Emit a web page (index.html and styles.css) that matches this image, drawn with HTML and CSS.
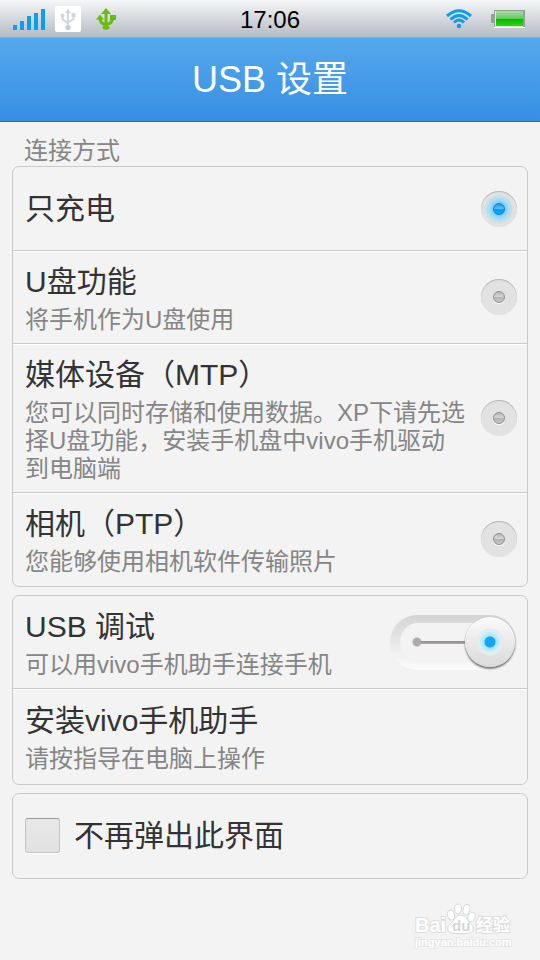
FILE: index.html
```html
<!DOCTYPE html>
<html lang="zh-CN">
<head>
  <meta charset="UTF-8">
  <meta name="viewport" content="width=device-width, initial-scale=1.0">
  <title>USB 设置</title>
  <link rel="stylesheet" href="styles.css">
</head>
<body>
  <div class="status-bar">
    <div class="status-left">
      <svg class="icon-signal" width="32" height="22" viewBox="0 0 32 22" fill="#0a9df0" aria-hidden="true">
        <rect x="0" y="17" width="4" height="5"/>
        <rect x="7" y="13" width="4" height="9"/>
        <rect x="14" y="8" width="4" height="14"/>
        <rect x="21" y="5" width="4" height="17"/>
        <rect x="28" y="1" width="4" height="21"/>
      </svg>
      <svg class="icon-usb" width="26" height="26" viewBox="0 0 26 26" aria-hidden="true">
        <rect width="26" height="26" rx="2" fill="#fff"/>
        <g fill="none" stroke="#d3d6d9" stroke-width="2">
          <path d="M13 5v15M7.500 10v3l5.500 4.500M18.500 9v4l-5.500 3.500"/>
        </g>
        <path d="M13 2.500l3 4.500h-6z" fill="#d3d6d9"/>
        <circle cx="7.500" cy="9.500" r="1.900" fill="#d3d6d9"/>
        <rect x="16.500" y="7" width="4" height="4" fill="#d3d6d9"/>
        <circle cx="13" cy="21.500" r="2.600" fill="#cacdd0"/>
      </svg>
      <svg class="icon-usb" width="20" height="22" viewBox="0 0 20 22" fill="#68bd0c" aria-hidden="true">
        <path d="M10 0l5 6h-10z"/>
        <path d="M0 11.500l4-5 4 5z"/>
        <rect x="14" y="7" width="6" height="5"/>
        <path d="M10 4v15M4 10c0 4 2 6 6 6.500M16.500 10c0 4-2.500 6-6.500 6.500" fill="none" stroke="#68bd0c" stroke-width="3"/>
        <ellipse cx="10" cy="19.500" rx="3.500" ry="2.200"/>
      </svg>
    </div>
    <time class="clock">17:06</time>
    <div class="status-right">
      <svg width="26" height="20" viewBox="0 0 26 20" fill="none" stroke="#0a9df0" stroke-width="3" aria-hidden="true">
        <path d="M1 7Q13-3.500 25 7"/>
        <path d="M4.500 10.500Q13 2.500 21.500 10.500"/>
        <path d="M8 13.500Q13 8.500 18 13.500"/>
        <circle cx="13" cy="17" r="2.200" fill="#0a9df0" stroke="none"/>
      </svg>
      <svg width="34" height="20" viewBox="0 0 34 20" aria-hidden="true">
        <defs>
          <linearGradient id="charge" x1="0" y1="0" x2="0" y2="1">
            <stop offset="0" stop-color="#a9dfa6"/>
            <stop offset=".5" stop-color="#62c95d"/>
            <stop offset=".51" stop-color="#12ad08"/>
            <stop offset="1" stop-color="#1fe000"/>
          </linearGradient>
        </defs>
        <rect x="3" y="18" width="31" height="1" fill="#fff"/>
        <rect x="0" y="5" width="3" height="9" fill="#999ca0"/>
        <rect x="3" y="1" width="31" height="17" fill="#999c9f"/>
        <rect x="4" y="2" width="28" height="16" fill="#e3e7e4"/>
        <rect x="5" y="2" width="27" height="15" fill="url(#charge)"/>
      </svg>
    </div>
  </div>

  <header class="header">
    <h1>USB 设置</h1>
  </header>

  <main class="content">
    <h2 class="section-title" id="mode-title">连接方式</h2>

    <div class="card" role="radiogroup" aria-labelledby="mode-title">
      <label class="row">
        <span class="row-title">只充电</span>
        <input type="radio" class="radio" name="mode" checked>
      </label>
      <label class="row">
        <span class="row-text">
          <span class="row-title">U盘功能</span>
          <span class="row-desc">将手机作为U盘使用</span>
        </span>
        <input type="radio" class="radio" name="mode">
      </label>
      <label class="row">
        <span class="row-text">
          <span class="row-title">媒体设备（MTP）</span>
          <span class="row-desc">您可以同时存储和使用数据。XP下请先选择U盘功能，安装手机盘中vivo手机驱动到电脑端</span>
        </span>
        <input type="radio" class="radio" name="mode">
      </label>
      <label class="row">
        <span class="row-text">
          <span class="row-title">相机（PTP）</span>
          <span class="row-desc">您能够使用相机软件传输照片</span>
        </span>
        <input type="radio" class="radio" name="mode">
      </label>
    </div>

    <div class="card">
      <label class="row">
        <span class="row-text">
          <span class="row-title">USB 调试</span>
          <span class="row-desc">可以用vivo手机助手连接手机</span>
        </span>
        <input type="checkbox" class="switch" role="switch" checked>
      </label>
      <a href="#" class="row row-link">
        <span class="row-text">
          <span class="row-title">安装vivo手机助手</span>
          <span class="row-desc">请按指导在电脑上操作</span>
        </span>
      </a>
    </div>

    <div class="card">
      <label class="row">
        <input type="checkbox" class="checkbox">
        <span class="row-title">不再弹出此界面</span>
      </label>
    </div>
  </main>

  <svg class="watermark" width="104" height="48" viewBox="0 0 104 48">
    <text class="wm-logo" x="5" y="30">Bai</text>
    <g fill="#fff" stroke="#d8d8d8" stroke-width="1">
      <ellipse cx="41" cy="13" rx="3.500" ry="5" transform="rotate(-15 41 13)"/>
      <ellipse cx="48" cy="7" rx="3.500" ry="5"/>
      <ellipse cx="56.500" cy="7.500" rx="3.500" ry="5" transform="rotate(12 56.500 7.500)"/>
      <ellipse cx="61.500" cy="15" rx="3.500" ry="5" transform="rotate(20 61.500 15)"/>
      <path d="M51 13c5 0 6 5 9 8 5 4 4 10-1 10-4 1-12 1-16 0-6 0-7-6-2-10 4-3 5-8 10-8z"/>
    </g>
    <text class="wm-du" x="42" y="29">du</text>
    <text class="wm-cn" x="66" y="29">经验</text>
    <text class="wm-url" x="5" y="44">jingyan.baidu.com</text>
  </svg>
</body>
</html>
```
FILE: styles.css
```css
* { margin: 0; padding: 0; box-sizing: border-box; }
body { position: relative; min-height: 100vh; background-color: #f3f3f3; color: #333; font-family: "Liberation Sans", "Noto Sans CJK SC", sans-serif; }

/* Status bar */
.status-bar { height: 38px; padding: 0 15px 0 13px; display: grid; grid-template-columns: 1fr auto 1fr; align-items: center; background: linear-gradient(#f6f7f8, #d5d8dc 50%, #b6bcc2); border-bottom: 1px solid #a3a8ae; }
.status-left { display: flex; align-items: center; gap: 10px; }
.icon-usb + .icon-usb { margin-left: 5px; }
.status-right { display: flex; align-items: center; justify-content: flex-end; gap: 19px; }
.clock { padding: 2px 0 0 2px; font-size: 24px; line-height: 34px; color: #000; }

/* Title bar */
.header { height: 84px; display: flex; align-items: center; justify-content: center; background: linear-gradient(#55a8eb, #368fe3); border-bottom: 1px solid #1b6fc0; }
.header h1 { font-size: 36px; line-height: 48px; font-weight: normal; color: #fff; }

/* Settings list */
.content { padding: 15px 12px 0; }
.section-title { padding: 0 12px; margin-bottom: 1px; font-size: 24px; line-height: 28px; font-weight: normal; color: #858585; }
.card { margin-bottom: 8px; border: 1px solid #cacaca; border-radius: 7px; overflow: hidden; }
.row { min-height: 83px; padding: 9px 10px 9px 12px; display: flex; align-items: center; gap: 14px; color: inherit; text-decoration: none; cursor: pointer; }
.row + .row { border-top: 1px solid #cacaca; box-shadow: inset 0 1px #fff; }
.row:last-child { min-height: 84px; padding-bottom: 10px; }
.row.row-link { min-height: 96px; }
.row-text { flex: 1; padding-top: 4px; display: flex; flex-direction: column; gap: 6px; }
.row-title { flex: 1; font-size: 30px; line-height: 36px; }
.row-desc { font-size: 24px; line-height: 28px; color: #858585; }

.radio { appearance: none; flex: none; width: 36px; height: 36px; border-radius: 50%; display: grid; place-items: center; background: #e2e2e2; box-shadow: inset 0 1px 1px #b4b4b4; cursor: pointer; }
.radio::before { content: ""; box-sizing: border-box; width: 12px; height: 12px; border: 1px solid #909090; border-radius: 50%; background: linear-gradient(#b0b0b0, #d4d4d4 45%, #b4b4b4 55%, #ccc) border-box; box-shadow: 0 1px #fff; }
.radio:checked { background: radial-gradient(circle, #65cff8 20%, #a9ddf0 38%, #e2e2e2 60%); }
.radio:checked::before { border-color: #0c80d4; background: linear-gradient(#168ee0, #5cbcf5 45%, #0799f4 55%, #08aeff) border-box; box-shadow: none; }

.switch { appearance: none; position: relative; flex: none; width: 127px; height: 55px; border: solid transparent; border-width: 8px 10px; border-radius: 28px; background: linear-gradient(#f3f3f3, #f3f3f3) padding-box, linear-gradient(#d3d3d3, #dedede 25%, #fcfcfc) border-box; cursor: pointer; }
.switch::before { content: ""; position: absolute; top: 14px; left: 12px; width: 60px; height: 10px; background: radial-gradient(circle at 5px 5px, #b0abab 4px, transparent 5px), linear-gradient(transparent 4px, #8f8989 4px, #b0abab 7px, transparent 7px) 5px 0 no-repeat; }
.switch::after { content: ""; position: absolute; top: -6px; right: -8px; width: 50px; height: 50px; border-radius: 50%; background: radial-gradient(circle, #12a5f5 5px, #a6e5f8 6px, #def1f5 11px, #e9e9e9 13px, transparent 14px), linear-gradient(#fafafa, #dadada); box-shadow: 0 2px 2px #777, 0 0 1px #999, inset 0 1px #fff; }
.switch:not(:checked)::after { right: auto; left: -8px; filter: grayscale(1); }

.checkbox { appearance: none; flex: none; width: 35px; height: 35px; border: 1px solid #c3c3c3; border-top-color: #999; border-radius: 3px; background: linear-gradient(#e8e8e8, #e1e1e1); box-shadow: 0 1px #fff; cursor: pointer; }
.checkbox:checked { background: #12a5f5; }

/* Watermark */
.watermark { position: absolute; right: 26px; bottom: 10px; pointer-events: none; }
.watermark text { fill: #fff; stroke: #dcdcdc; stroke-width: 2px; paint-order: stroke; font-weight: bold; }
.wm-logo { font-size: 20px; }
.watermark .wm-du { font-size: 15px; fill: #d6d6d6; stroke: none; }
.wm-cn { font-size: 17px; }
.watermark .wm-url { font-size: 11px; stroke: #e6e6e6; }
```
